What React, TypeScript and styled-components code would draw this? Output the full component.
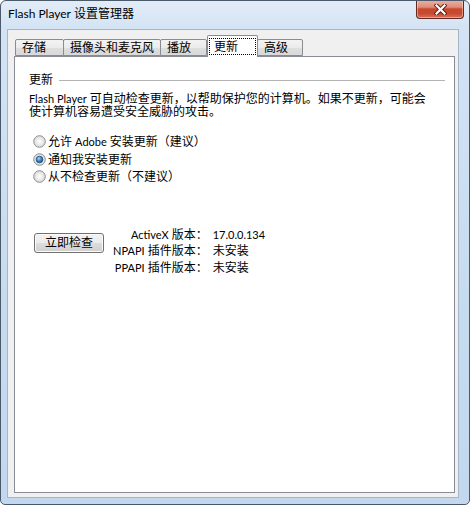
import React, { useId } from "react";
import styled, { createGlobalStyle } from "styled-components";

const Global = createGlobalStyle`
  html, body { margin: 0; padding: 0; background: #ffffff; }
  body {
    font-family: "Lato", "Noto Sans CJK SC", sans-serif;
    font-size: 12px;
    color: #000;
  }
  * { box-sizing: border-box; }
`;

const Window = styled.div`
  width: 470px;
  height: 505px;
  border: 1px solid #4b5a6a;
  border-radius: 6px 6px 5px 5px;
  background: linear-gradient(180deg, #e2ecf7 0px, #d3e3f4 28px, #c7dbef 60%, #c3d8ee 100%);
  display: flex;
  flex-direction: column;
  overflow: hidden;
`;

const TitleBar = styled.div`
  height: 28px;
  display: flex;
  align-items: flex-start;
  padding-left: 7px;
  padding-right: 5px;
`;

const Title = styled.div`
  font-size: 12px;
  line-height: 16px;
  margin-top: 5px;
  color: #000;
`;

const Latin = styled.span<{ $size?: number }>`
  font-family: "Lato", sans-serif;
  font-size: ${(p) => p.$size ?? 11}px;
`;

const CloseButton = styled.div`
  margin-left: auto;
  width: 48px;
  height: 19px;
  margin-top: -1px;
  border: 1px solid #5e2a22;
  border-top: none;
  border-radius: 0 0 4px 4px;
  background: linear-gradient(180deg, #eab3a5 0%, #df8c78 40%, #c9462c 50%, #c74a30 75%, #d9705a 100%);
  box-shadow: inset 0 0 0 1px rgba(255, 220, 210, 0.5);
  display: flex;
  align-items: center;
  justify-content: center;
`;

const Client = styled.div`
  flex: 1;
  margin: 0 10px 6px 6px;
  border: 1px solid #a3b6ca;
  background: #f0f0f0;
  padding: 5px 3px 4px 6px;
  display: flex;
  flex-direction: column;
`;

const TabRow = styled.div`
  height: 21px;
  display: flex;
  align-items: flex-end;
  padding-left: 1px;
`;

const Tab = styled.div<{ $active?: boolean; $width: number }>`
  position: relative;
  flex: none;
  width: ${(p) => p.$width}px;
  height: ${(p) => (p.$active ? 22 : 17)}px;
  margin: ${(p) => (p.$active ? "0 0 -1px 0" : "0 0 0 -1px")};
  padding: ${(p) => (p.$active ? "2px 1px 0 1px" : "0 0 0 6px")};
  z-index: ${(p) => (p.$active ? 2 : 1)};
  border: 1px solid #898c95;
  border-bottom: ${(p) => (p.$active ? "none" : "1px solid #898c95")};
  border-radius: 2px 2px 0 0;
  background: ${(p) =>
    p.$active ? "#ffffff" : "linear-gradient(180deg, #f3f3f3 0%, #ebebeb 50%, #dedede 51%, #d9d9d9 100%)"};
  font-size: 12px;
  line-height: 15px;
  white-space: nowrap;
  &:first-child { margin-left: 0; }
`;

const FocusRing = styled.div`
  border: 1px dotted #000;
  height: 17px;
  padding: 0 0 0 4px;
  line-height: 15px;
`;

const Panel = styled.div`
  flex: 1;
  border: 1px solid #898c95;
  background: #ffffff;
  padding: 16px 9px 0 14px;
  display: flex;
  flex-direction: column;
`;

const GroupHeader = styled.div`
  display: flex;
  align-items: center;
  gap: 6px;
  height: 13px;
  line-height: 13px;
`;

const GroupLine = styled.div`
  flex: 1;
  height: 1px;
  background: #b4b4b4;
  margin-top: 1px;
`;

const Description = styled.p`
  margin: 6px 0 0 0;
  line-height: 13px;
  width: 400px;
`;

const RadioGroup = styled.div`
  margin-top: 15px;
  padding-left: 4px;
  display: flex;
  flex-direction: column;
`;

const RadioRow = styled.label`
  display: flex;
  align-items: center;
  gap: 2px;
  height: 17.5px;
  line-height: 17px;
`;

const CheckArea = styled.div`
  margin-top: 41px;
  display: flex;
  align-items: flex-start;
  gap: 9px;
`;

const PushButton = styled.button`
  margin: 6px 0 0 5px;
  width: 70px;
  height: 20px;
  padding: 0;
  border: 1px solid #707070;
  border-radius: 3px;
  background: linear-gradient(180deg, #f2f2f2 0%, #ebebeb 50%, #dddddd 51%, #cfcfcf 100%);
  box-shadow: inset 0 0 0 1px #fbfbfb;
  font-family: "Lato", "Noto Sans CJK SC", sans-serif;
  font-size: 12px;
  line-height: 16px;
  color: #000;
`;

const VersionGrid = styled.div`
  display: grid;
  grid-template-columns: auto auto;
  column-gap: 5px;
  line-height: 16.5px;
`;

const VersionLabel = styled.div`
  text-align: right;
  white-space: nowrap;
`;

const VersionValue = styled.div`
  white-space: nowrap;
`;

function Radio({ checked }: { checked?: boolean }) {
  const id = useId().replace(/:/g, "");
  return (
    <svg width="13" height="13" viewBox="0 0 13 13">
      <defs>
        <radialGradient id={`bg${id}`} cx="0.5" cy="0.5" r="0.6">
          <stop offset="0" stopColor="#ffffff" />
          <stop offset="0.55" stopColor="#e6e6e6" />
          <stop offset="1" stopColor="#cfcfcf" />
        </radialGradient>
        <radialGradient id={`dot${id}`} cx="0.4" cy="0.35" r="0.7">
          <stop offset="0" stopColor="#a6d6f6" />
          <stop offset="0.5" stopColor="#3c8ccc" />
          <stop offset="1" stopColor="#16467a" />
        </radialGradient>
      </defs>
      <circle cx="6.5" cy="6.5" r="5.8" fill={`url(#bg${id})`} stroke="#8e8f8f" strokeWidth="1" />
      {checked && <circle cx="6.5" cy="6.5" r="3.3" fill={`url(#dot${id})`} stroke="#1b4b7c" strokeWidth="0.8" />}
    </svg>
  );
}

function CloseGlyph() {
  return (
    <svg width="13" height="11" viewBox="0 0 13 11">
      <path d="M2.5 1.5 L10.5 9.5 M10.5 1.5 L2.5 9.5" stroke="#5a1a10" strokeWidth="4" strokeLinecap="square" />
      <path d="M2.5 1.5 L10.5 9.5 M10.5 1.5 L2.5 9.5" stroke="#ffffff" strokeWidth="2.2" strokeLinecap="square" />
    </svg>
  );
}

const tabs = [
  { label: "存储", width: 49 },
  { label: "摄像头和麦克风", width: 98 },
  { label: "播放", width: 47 },
  { label: "更新", width: 51 },
  { label: "高级", width: 46 },
];
const activeTab = 3;

export default function App() {
  return (
    <>
      <Global />
      <Window>
        <TitleBar>
          <Title>
            <Latin $size={12}>Flash Player</Latin> 设置管理器
          </Title>
          <CloseButton>
            <CloseGlyph />
          </CloseButton>
        </TitleBar>
        <Client>
          <TabRow>
            {tabs.map((t, i) =>
              i === activeTab ? (
                <Tab key={t.label} $active $width={t.width}>
                  <FocusRing>{t.label}</FocusRing>
                </Tab>
              ) : (
                <Tab key={t.label} $width={t.width}>
                  {t.label}
                </Tab>
              )
            )}
          </TabRow>
          <Panel>
            <GroupHeader>
              <span>更新</span>
              <GroupLine />
            </GroupHeader>
            <Description>
              <Latin>Flash Player</Latin> 可自动检查更新，以帮助保护您的计算机。如果不更新，可能会使计算机容易遭受安全威胁的攻击。
            </Description>
            <RadioGroup>
              <RadioRow>
                <Radio />
                <span>
                  允许 <Latin>Adobe</Latin> 安装更新（建议）
                </span>
              </RadioRow>
              <RadioRow>
                <Radio checked />
                <span>通知我安装更新</span>
              </RadioRow>
              <RadioRow>
                <Radio />
                <span>从不检查更新（不建议）</span>
              </RadioRow>
            </RadioGroup>
            <CheckArea>
              <PushButton>立即检查</PushButton>
              <VersionGrid>
                <VersionLabel>
                  <Latin>ActiveX</Latin> 版本：
                </VersionLabel>
                <VersionValue>
                  <Latin>17.0.0.134</Latin>
                </VersionValue>
                <VersionLabel>
                  <Latin>NPAPI</Latin> 插件版本：
                </VersionLabel>
                <VersionValue>未安装</VersionValue>
                <VersionLabel>
                  <Latin>PPAPI</Latin> 插件版本：
                </VersionLabel>
                <VersionValue>未安装</VersionValue>
              </VersionGrid>
            </CheckArea>
          </Panel>
        </Client>
      </Window>
    </>
  );
}
